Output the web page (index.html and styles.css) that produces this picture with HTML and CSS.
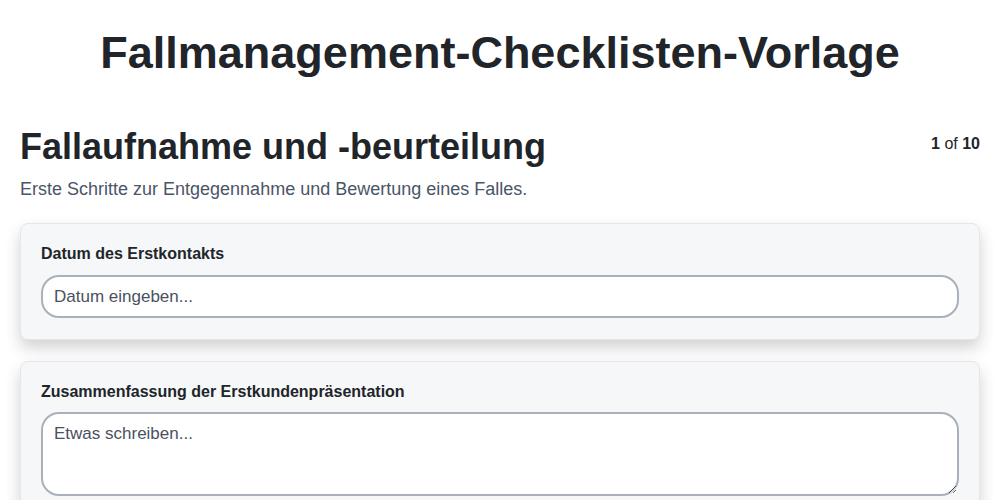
FILE: index.html
```html
<!DOCTYPE html>
<html lang="de">

<head>
    <meta charset="UTF-8">
    <meta name="viewport" content="width=device-width, initial-scale=1.0">
    <title>Fallmanagement-Checklisten-Vorlage</title>
    <link rel="stylesheet" href="styles.css">
</head>

<body>
    <h1>Fallmanagement-Checklisten-Vorlage</h1>

    <div class="section-header">
        <h2>Fallaufnahme und -beurteilung</h2>
        <div class="progress"><b>1</b> of <b>10</b></div>
    </div>
    <p class="section-desc">Erste Schritte zur Entgegennahme und Bewertung eines Falles.</p>

    <div class="card">
        <label for="erstkontakt">Datum des Erstkontakts</label>
        <input type="text" id="erstkontakt" placeholder="Datum eingeben...">
    </div>

    <div class="card">
        <label for="praesentation">Zusammenfassung der Erstkundenpräsentation</label>
        <textarea id="praesentation" placeholder="Etwas schreiben..."></textarea>
    </div>
</body>

</html>
```

FILE: styles.css
```css
body {
    font-family: "Liberation Sans", Arial, sans-serif;
    color: #212529;
    margin: 0;
    padding: 0 20px 20px;
    background-color: white;
}

h1 {
    font-size: 45px;
    text-align: center;
    margin: 26px 0 45px;
    line-height: 1.2;
}

.section-header {
    display: flex;
    justify-content: space-between;
    align-items: flex-start;
}

h2 {
    font-size: 36px;
    margin: 0;
    line-height: 1.2;
}

.progress {
    font-size: 16px;
    color: #212529;
    padding-top: 10px;
}

.section-desc {
    font-size: 18px;
    color: #4a5568;
    margin: 11px 0 23px;
}

.card {
    background-color: #f6f7f9;
    border: 1px solid #e3e6ea;
    border-radius: 8px;
    padding: 21px 20px;
    margin-bottom: 21px;
    box-shadow: 0 8px 16px rgba(0, 0, 0, 0.18);
}

label {
    display: block;
    font-weight: bold;
    font-size: 16px;
    margin-bottom: 12px;
}

.card + .card label {
    margin-bottom: 11px;
}

input[type="text"],
textarea {
    display: block;
    box-sizing: border-box;
    width: 100%;
    font-family: "Liberation Sans", Arial, sans-serif;
    font-size: 17px;
    color: #212529;
    padding: 10px 11px;
    border: 2px solid #a9b0b9;
    border-radius: 18px;
    background-color: white;
}

input[type="text"] {
    height: 43px;
}

textarea {
    height: 84px;
}

::placeholder {
    color: #4a5260;
}
```
